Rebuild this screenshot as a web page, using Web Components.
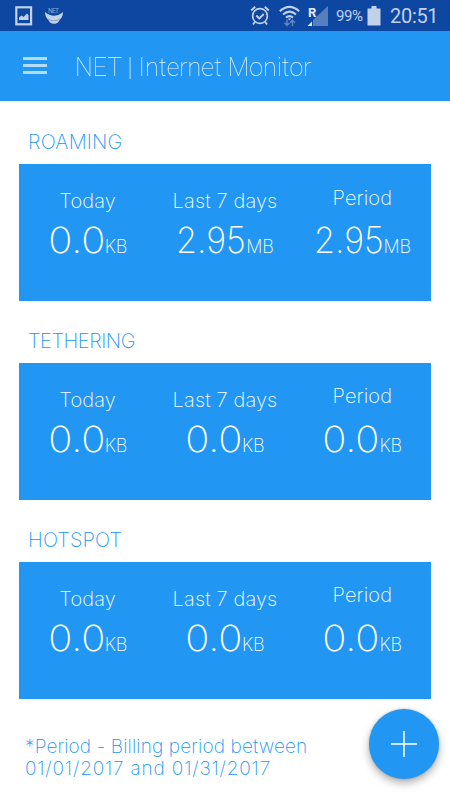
<!DOCTYPE html>
<html lang="en">
<head>
<meta charset="utf-8">
<title>NET | Internet Monitor</title>
<style>
  body { margin: 0; background: #fff; font-family: Inter, "Open Sans", sans-serif; }
  .dates { letter-spacing: 0.83px; }
</style>
</head>
<body>
<net-app>
  <status-bar slot="status" battery="99%" time="20:51"></status-bar>
  <app-bar slot="bar">NET | Internet Monitor</app-bar>
  <usage-section label="ROAMING" track="0.15px">
    <usage-stat label="Today" value="0.0" unit="KB"></usage-stat>
    <usage-stat label="Last 7 days" value="2.95" unit="MB"></usage-stat>
    <usage-stat label="Period" value="2.95" unit="MB" raised></usage-stat>
  </usage-section>
  <usage-section label="TETHERING" track="-0.45px">
    <usage-stat label="Today" value="0.0" unit="KB"></usage-stat>
    <usage-stat label="Last 7 days" value="0.0" unit="KB"></usage-stat>
    <usage-stat label="Period" value="0.0" unit="KB" raised></usage-stat>
  </usage-section>
  <usage-section label="HOTSPOT" track="0.15px">
    <usage-stat label="Today" value="0.0" unit="KB"></usage-stat>
    <usage-stat label="Last 7 days" value="0.0" unit="KB"></usage-stat>
    <usage-stat label="Period" value="0.0" unit="KB" raised></usage-stat>
  </usage-section>
  <period-note slot="note">*Period - Billing period between<br><span class="dates">01/01/2017 and 01/31/2017</span></period-note>
  <add-button slot="fab"></add-button>
</net-app>

<script>
class NetApp extends HTMLElement {
  constructor() {
    super();
    this.attachShadow({ mode: 'open' });
    this.shadowRoot.innerHTML = `
      <style>
        :host {
          display: flex;
          flex-direction: column;
          position: relative;
          width: 450px;
          height: 800px;
          overflow: hidden;
        }
        main {
          display: flex;
          flex-direction: column;
          padding: 29px 19px 0;
        }
      </style>
      <slot name="status"></slot>
      <slot name="bar"></slot>
      <main>
        <slot></slot>
        <slot name="note"></slot>
      </main>
      <slot name="fab"></slot>
    `;
  }
}

class StatusBar extends HTMLElement {
  connectedCallback() {
    this.attachShadow({ mode: 'open' });
    this.shadowRoot.innerHTML = `
      <style>
        :host {
          display: flex;
          align-items: center;
          height: 31px;
          padding: 0 12px 0 15px;
          box-sizing: border-box;
          background: #0d47a1;
          color: #c3d1e8;
          font-family: Roboto, sans-serif;
        }
        svg { display: block; flex: none; }
        .picture { margin-right: 12px; }
        .alarm { margin-left: auto; margin-right: 9px; }
        .wifi { margin-right: 7px; }
        .signal { margin-right: 8px; }
        .battery { width: 27px; font-size: 15px; letter-spacing: -0.4px; margin-right: 4px; padding-top: 1px; }
        .cell { margin-right: 9px; }
        .time { width: 48px; font-size: 20px; letter-spacing: -0.3px; padding-top: 1px; white-space: nowrap; }
      </style>
      <svg class="picture" width="18" height="20" viewBox="0 0 18 20">
        <rect x="1.3" y="1.3" width="14.8" height="17" fill="none" stroke="#c3d1e8" stroke-width="2.2"/>
        <path d="M4 14v-2.500l2.500-2 2 1.500 3.500-3.500 1.500 1.500v5z" fill="#c3d1e8"/>
      </svg>
      <svg width="18" height="18" viewBox="0 0 18 18">
        <text x="8.500" y="6" text-anchor="middle" font-size="6.500" textLength="11" fill="#8ba6d2">NET</text>
        <path d="M0 5Q9 12.500 18 5Q18 10 15 12.500L13 15.500Q9 18 5 15.500L3 12.500Q0 10 0 5Z" fill="#c3d1e8"/>
        <path d="M3 12Q9 15.500 15 12" fill="none" stroke="#7594c6" stroke-width=".8"/>
      </svg>
      <svg class="alarm" width="20" height="21" viewBox="0 0 20 21" fill="none" stroke="#c3d1e8">
        <circle cx="10" cy="11" r="7.400" stroke-width="1.700"/>
        <path d="M6.300 10.500l3 3 4.500-4.500M1.200 5.500l4-3.800M18.800 5.500l-4-3.800M4.800 17l-1.800 2.500M15.200 17l1.800 2.500" stroke-width="1.900"/>
      </svg>
      <svg class="wifi" width="21" height="22" viewBox="0 0 21 22" fill="none">
        <path d="M.8 6.200Q10.500-2.500 20.200 6.200M4 9.500Q10.500 3.800 17 9.500M7 12.600Q10.500 9.600 14 12.600" stroke="#c3d1e8" stroke-width="2"/>
        <path d="M8.800 13.500L10.500 15.500 12.200 13.500Z" fill="#c3d1e8"/>
        <path d="M8 14.500v5.500M5.500 17.800l2.500 2.700 2.500-2.700M13.500 21v-5.500M11 17.800l2.500-2.700 2.500 2.700" stroke="#6385be" stroke-width="1.500"/>
      </svg>
      <svg class="signal" width="21" height="21" viewBox="0 0 21 21">
        <path d="M21 1V21H6V15Z" fill="#567fbd"/>
        <path d="M5 16.500V21H.5Z" fill="#e4ebf6"/>
        <text x="1" y="11.500" font-size="13" font-weight="700" fill="#e4ebf6">R</text>
      </svg>
      <span class="battery">${this.getAttribute('battery')}</span>
      <svg class="cell" width="14" height="20" viewBox="0 0 14 20">
        <path d="M4.500 0h5v2.500H13.500V19.500H.5V2.500h4z" fill="#c3d1e8"/>
      </svg>
      <span class="time">${this.getAttribute('time')}</span>
    `;
  }
}

class AppBar extends HTMLElement {
  constructor() {
    super();
    this.attachShadow({ mode: 'open' });
    this.shadowRoot.innerHTML = `
      <style>
        :host {
          display: flex;
          align-items: center;
          gap: 28px;
          height: 70px;
          padding-left: 23px;
          background: #2196f3;
          color: #ecf6fe;
          font: 100 25px/34px Roboto, sans-serif;
        }
        .title { padding-top: 3px; white-space: nowrap; will-change: transform; }
        .menu { display: flex; flex-direction: column; gap: 4px; width: 24px; margin-bottom: 1px; }
        .menu i { height: 3px; background: #b5dbfa; }
      </style>
      <div class="menu"><i></i><i></i><i></i></div>
      <div class="title"><slot></slot></div>
    `;
  }
}

class UsageSection extends HTMLElement {
  connectedCallback() {
    this.attachShadow({ mode: 'open' });
    this.shadowRoot.innerHTML = `
      <style>
        :host { display: block; height: 198.800px; }
        .label {
          padding-left: 9px;
          color: #2196f3;
          font-size: 20px;
          font-weight: 200;
          line-height: 24px;
          letter-spacing: ${this.getAttribute('track')};
        }
        .card {
          display: grid;
          grid-template-columns: repeat(3, 1fr);
          height: 137.300px;
          margin-top: 10px;
          background: #2196f3;
        }
      </style>
      <div class="label">${this.getAttribute('label')}</div>
      <div class="card"><slot></slot></div>
    `;
  }
}

class UsageStat extends HTMLElement {
  connectedCallback() {
    this.attachShadow({ mode: 'open' });
    this.shadowRoot.innerHTML = `
      <style>
        :host {
          display: flex;
          flex-direction: column;
          align-items: center;
          padding-top: 25px;
          color: #fff;
          white-space: nowrap;
        }
        :host([raised]) { padding-top: 21.500px; }
        :host([raised]) .value { margin-top: 8.500px; }
        .name { font-size: 20px; font-weight: 200; line-height: 24px; letter-spacing: 0.15px; }
        .value { margin-top: 5px; font-size: 36px; font-weight: 200; line-height: 44px; }
        /* the digits are set narrower, a zero reading wider */
        .number { display: inline-block; margin: 0 -2px; transform: scaleX(0.945); }
        :host([value="0.0"]) .number { margin: 0 2.500px; transform: scaleX(1.11); }
        .value small { font-size: 18px; letter-spacing: -0.2px; }
      </style>
      <div class="name">${this.getAttribute('label')}</div>
      <div class="value"><span class="number">${this.getAttribute('value')}</span><small>${this.getAttribute('unit')}</small></div>
    `;
  }
}

class PeriodNote extends HTMLElement {
  constructor() {
    super();
    this.attachShadow({ mode: 'open' });
    this.shadowRoot.innerHTML = `
      <style>
        :host {
          display: block;
          padding: 10px 0 0 6px;
          color: #2196f3;
          font-size: 19px;
          font-weight: 200;
          line-height: 22px;
          letter-spacing: 0.13px;
          white-space: nowrap;
        }
      </style>
      <slot></slot>
    `;
  }
}

class AddButton extends HTMLElement {
  constructor() {
    super();
    this.attachShadow({ mode: 'open' });
    this.shadowRoot.innerHTML = `
      <style>
        /* floats over the page content */
        :host {
          position: absolute;
          right: 11px;
          bottom: 21px;
          display: flex;
          align-items: center;
          justify-content: center;
          width: 70px;
          height: 70px;
          border-radius: 50%;
          background: #2196f3;
          box-shadow: 0 4px 8px rgba(0, 0, 0, 0.32), 0 0 2px rgba(0, 0, 0, 0.25);
        }
      </style>
      <svg width="26" height="26" viewBox="0 0 26 26" stroke="#fff" stroke-width="1.500">
        <path d="M13 0v26M0 13h26"/>
      </svg>
    `;
  }
}

customElements.define('net-app', NetApp);
customElements.define('status-bar', StatusBar);
customElements.define('app-bar', AppBar);
customElements.define('usage-section', UsageSection);
customElements.define('usage-stat', UsageStat);
customElements.define('period-note', PeriodNote);
customElements.define('add-button', AddButton);
</script>
</body>
</html>
